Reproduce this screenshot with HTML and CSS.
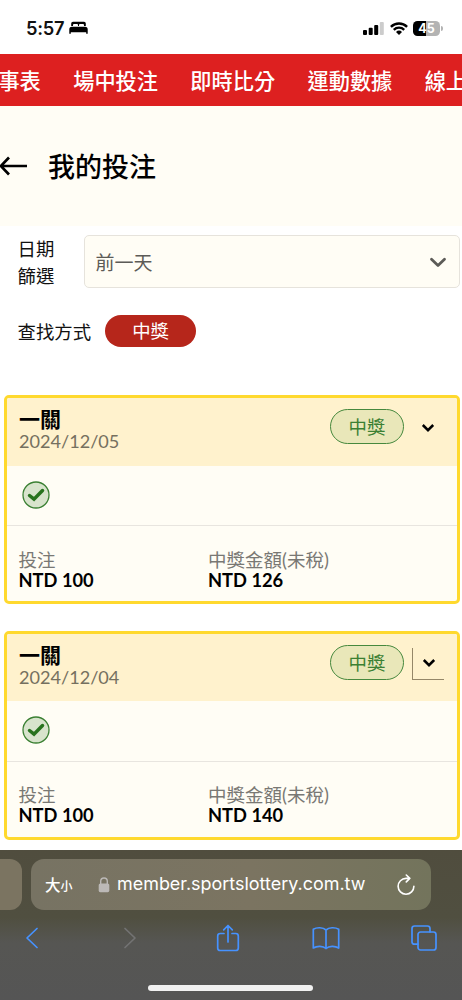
FILE: index.html
```html
<!DOCTYPE html>
<html lang="zh-Hant">
<head>
<meta charset="utf-8">
<meta name="viewport" content="width=device-width, initial-scale=1">
<title>我的投注</title>
<link rel="stylesheet" href="styles.css">
</head>
<body>
<div class="phone">
  <header class="status">
    <span class="time">5:57</span>
    <svg class="bed" width="19" height="14" viewBox="0 0 19 14"><path d="M2.2 5V2.4Q2.2.7 4 .7H15Q16.8.7 16.8 2.4V5H15V4Q15 3 14 3H11Q10 3 10 4V5H9V4Q9 3 8 3H5Q4 3 4 4V5ZM.3 12.7V8.2Q.3 5.7 2.8 5.7H16Q18.7 5.7 18.7 8.2V12.7H17.2V11.3H1.8V12.7Z"/></svg>
    <svg class="signal" width="21" height="13" viewBox="0 0 21 13"><rect y="8" width="4" height="5" rx="1"/><rect x="5.7" y="5.7" width="4" height="7.3" rx="1"/><rect x="11.2" y="3" width="4" height="10" rx="1"/><rect x="16.8" y="0" width="4" height="13" rx="1" fill="#ccc"/></svg>
    <svg class="wifi" width="18" height="13" viewBox="0 0 18 13" fill="none" stroke="#000" stroke-width="2.4"><path d="M.9 4.8A11.7 11.7 0 0 1 17.1 4.8M3.8 7.8A7.4 7.4 0 0 1 14.2 7.8"/><path d="M6 9.9A4.4 4.4 0 0 1 12 9.9L9 13Z" fill="#000" stroke="none"/></svg>
    <span class="battery">45</span><span class="cap"></span>
  </header>
  <nav class="nav"><span>事表</span><span>場中投注</span><span>即時比分</span><span>運動數據</span><span>線上</span></nav>
  <div class="title">
    <svg width="29" height="20" viewBox="0 0 29 20" fill="none" stroke="#000" stroke-width="2.7"><path d="M27 10H1M9 1.5L.8 10L9 18.5"/></svg>
    <h1>我的投注</h1>
  </div>
  <main>
    <div class="filter">
      <label>日期篩選</label>
      <div class="select"><span>前一天</span><svg width="18" height="12" viewBox="0 0 18 12" fill="none" stroke="#5c5b57" stroke-width="2.8" stroke-linecap="round" stroke-linejoin="round"><path d="M2.5 3.3L9 9.5L15.5 3.3"/></svg></div>
    </div>
    <div class="method"><span>查找方式</span><b class="pill">中獎</b></div>
    <section class="card">
      <div class="card-head">
        <div class="name"><h2>一關</h2><time>2024/12/05</time></div>
        <span class="badge">中獎</span>
        <span class="toggle"><svg width="14" height="10" viewBox="0 0 14 10"><path d="M1.8 2L7 7.2L12.2 2"/></svg></span>
      </div>
      <div class="result"><svg width="28" height="28" viewBox="0 0 28 28"><circle cx="14" cy="14" r="13"/><path d="M7.5 14.5L12 18.2L20.5 9.5"/></svg></div>
      <div class="amounts"><div><span>投注</span><strong>NTD 100</strong></div><div><span>中獎金額(未稅)</span><strong>NTD 126</strong></div></div>
    </section>
    <section class="card">
      <div class="card-head">
        <div class="name"><h2>一關</h2><time>2024/12/04</time></div>
        <span class="badge">中獎</span>
        <span class="toggle focused"><svg width="14" height="10" viewBox="0 0 14 10"><path d="M1.8 2L7 7.2L12.2 2"/></svg></span>
      </div>
      <div class="result"><svg width="28" height="28" viewBox="0 0 28 28"><circle cx="14" cy="14" r="13"/><path d="M7.5 14.5L12 18.2L20.5 9.5"/></svg></div>
      <div class="amounts"><div><span>投注</span><strong>NTD 100</strong></div><div><span>中獎金額(未稅)</span><strong>NTD 140</strong></div></div>
    </section>
  </main>
  <footer class="browser">
    <div class="tabs">
      <div class="prev-tab"></div>
      <div class="address">
        <span class="aa">大<small>小</small></span>
        <svg class="lock" width="12" height="16" viewBox="0 0 12 16"><path d="M2.7 7V4.3a3.3 3.3 0 0 1 6.6 0V7" fill="none" stroke="#bcb9b7" stroke-width="1.4"/><rect x=".7" y="6.5" width="10.6" height="8.7" rx="1.6" fill="#bcb9b7"/></svg>
        <span class="url">member.sportslottery.com.tw</span>
        <svg class="reload" width="20" height="22" viewBox="0 0 20 22" fill="none" stroke="#fff" stroke-width="1.6" stroke-linecap="round" stroke-linejoin="round"><path d="M13.8 4.4H10A7.9 7.9 0 1 0 17.9 12.3M10.3 1L13.8 4.4L10.3 7.9"/></svg>
      </div>
    </div>
    <div class="tools">
      <svg width="14" height="22" viewBox="0 0 14 22"><path d="M12 1.5L2 11L12 20.5"/></svg>
      <svg class="off" width="14" height="22" viewBox="0 0 14 22"><path d="M2 1.5L12 11L2 20.5"/></svg>
      <svg width="24" height="28" viewBox="0 0 24 28"><path d="M8 9.5H4.2Q1.7 9.5 1.7 12V24Q1.7 26.5 4.2 26.5H19.8Q22.3 26.5 22.3 24V12Q22.3 9.5 19.8 9.5H16M12 18V1.5M7.7 5.8L12 1.5L16.3 5.8"/></svg>
      <svg width="28" height="24" viewBox="0 0 28 24"><path d="M14 4C11 1.3 5 1 1.3 3.3V22C5 19.7 11 19.7 14 22.5C17 19.7 23 19.7 26.7 22V3.3C23 1 17 1.3 14 4V22.5"/></svg>
      <svg width="26" height="26" viewBox="0 0 26 26"><path d="M6.8 19.2H3.5Q1 19.2 1 16.7V3.5Q1 1 3.5 1H16.5Q19 1 19 3.5V6.8"/><rect x="7" y="7" width="18" height="18" rx="2.5"/></svg>
    </div>
    <div class="home"></div>
  </footer>
</div>
</body>
</html>
```
FILE: styles.css
```css
* { box-sizing: border-box; }
body { margin: 0; background: #fff; font-family: Lato, "Noto Sans CJK TC", sans-serif; color: #111; }
h1, h2 { margin: 0; }
svg { display: block; flex: none; }
.phone { width: 462px; height: 1000px; overflow: hidden; display: flex; flex-direction: column; }
.status { height: 54px; flex: none; display: flex; align-items: center; padding: 2px 19px 0 26px; }
.time { font: 600 18.3px/22px Inter, sans-serif; letter-spacing: -.3px; width: 43px; white-space: nowrap; }
.signal { margin-left: auto; }
.wifi { margin: 0 5px 0 6px; }
.battery { width: 27px; height: 15px; border-radius: 4.5px; background: linear-gradient(90deg, #000 47%, #b3b3b3 47%); color: #fff; font: 700 12.5px/15px Inter, sans-serif; text-align: center; }
.cap { width: 2px; height: 5px; margin-left: 1px; border-radius: 0 2px 2px 0; background: #b3b3b3; }
.nav { height: 52px; flex: none; display: flex; gap: 32.4px; margin-left: -1.6px; background: #dd2020; color: #fff; font-size: 21.2px; font-weight: 500; line-height: 54px; white-space: nowrap; }
.title { height: 119.5px; flex: none; display: flex; align-items: center; gap: 19px; background: #fffdf5; }
.title h1 { color: #000; font-size: 27px; line-height: 40px; font-weight: 500; padding-top: 2px; }
main { height: 624.5px; flex: none; padding: 9.5px 2px 0 4px; }
.filter { display: flex; height: 53px; }
.filter label { width: 66px; margin: 0 0 0 13.5px; padding: 1px 28px 0 0; font-size: 18.4px; line-height: 27px; }
.select { flex: 1; border: 1px solid #e6e3dc; border-radius: 5px; background: #fffdf5; display: flex; align-items: center; justify-content: space-between; padding: 0 12px 0 11px; font-size: 19px; color: #5c5b57; }
.method { margin: 27px 0 0 13.5px; height: 32px; display: flex; align-items: center; gap: 14px; font-size: 18.4px; }
.pill { width: 91px; height: 32px; border-radius: 16px; background: #b6261b; color: #fff; font-weight: 400; text-align: center; line-height: 32px; }
.card { height: 209px; border: 3px solid #ffd92e; border-radius: 5px; background: #fffdf5; overflow: hidden; }
.method + .card { margin-top: 48px; }
.card + .card { margin-top: 26.5px; }
.card-head { height: 67.5px; background: #fff2cd; display: flex; align-items: flex-start; padding: 11px 13px 0 12px; }
.name { flex: 1; margin-top: -3px; }
.name h2 { color: #000; font-size: 21px; font-weight: 700; line-height: 25px; }
.name time { display: block; font-size: 18.1px; line-height: 21px; color: #75705f; }
.badge { width: 74px; height: 35px; border: 1.5px solid #46883d; border-radius: 18px; background: #e9e7b9; color: #3b8033; font-size: 18.4px; line-height: 34px; text-align: center; }
.toggle { width: 32px; height: 32px; margin: 3px 0 0 8px; display: grid; place-items: center; }
.toggle path { fill: none; stroke: #000; stroke-width: 2.5; }
.focused { border-left: 1px solid #958768; border-bottom: 1px solid #958768; }
.result { height: 60.5px; padding: 15px 0 0 15px; border-bottom: 1.5px solid #e8e5df; }
.result circle { fill: #d8e4cc; stroke: #3b8033; stroke-width: 1.3; }
.result path { fill: none; stroke: #28731e; stroke-width: 3.5; stroke-linecap: round; }
.amounts { display: grid; grid-template-columns: 189.5px 1fr; padding: 22.5px 0 0 11.5px; }
.amounts span { display: block; font-size: 18.5px; line-height: 22px; color: #797874; }
.amounts strong { display: block; font-size: 18.3px; line-height: 19px; color: #000; }
.browser { height: 150px; flex: none; background: linear-gradient(#504d3e 0, #504f40 45%, #565653 62%, #555 100%); }
.tabs { padding-top: 9px; display: flex; gap: 9px; }
.prev-tab { width: 22px; height: 51px; border-radius: 0 12px 12px 0; background: #7b7461; }
.address { width: 400px; height: 51px; border-radius: 13px; background: linear-gradient(90deg, #777363, #7b7461 55%, #73745c); color: #fff; display: flex; align-items: center; padding: 0 15px 0 14px; }
.aa { width: 53px; font: 500 15.5px/24px "Noto Sans CJK TC", sans-serif; white-space: nowrap; }
.aa small { font-size: 12px; }
.url { margin-left: 7px; font: 400 17.95px/22px Inter, sans-serif; padding-bottom: 2px; white-space: nowrap; }
.reload { margin-left: auto; }
.tools { width: 490px; height: 55px; margin-left: -17px; display: grid; grid-template-columns: repeat(5, 98px); place-items: center; }
.tools path, .tools rect { fill: none; stroke: #4692ff; stroke-width: 1.7; stroke-linecap: round; stroke-linejoin: round; }
.tools .off path { stroke: #737373; }
.home { width: 165px; height: 6px; border-radius: 3px; background: #f1f1f1; margin: 20px auto 0 148px; }
```
